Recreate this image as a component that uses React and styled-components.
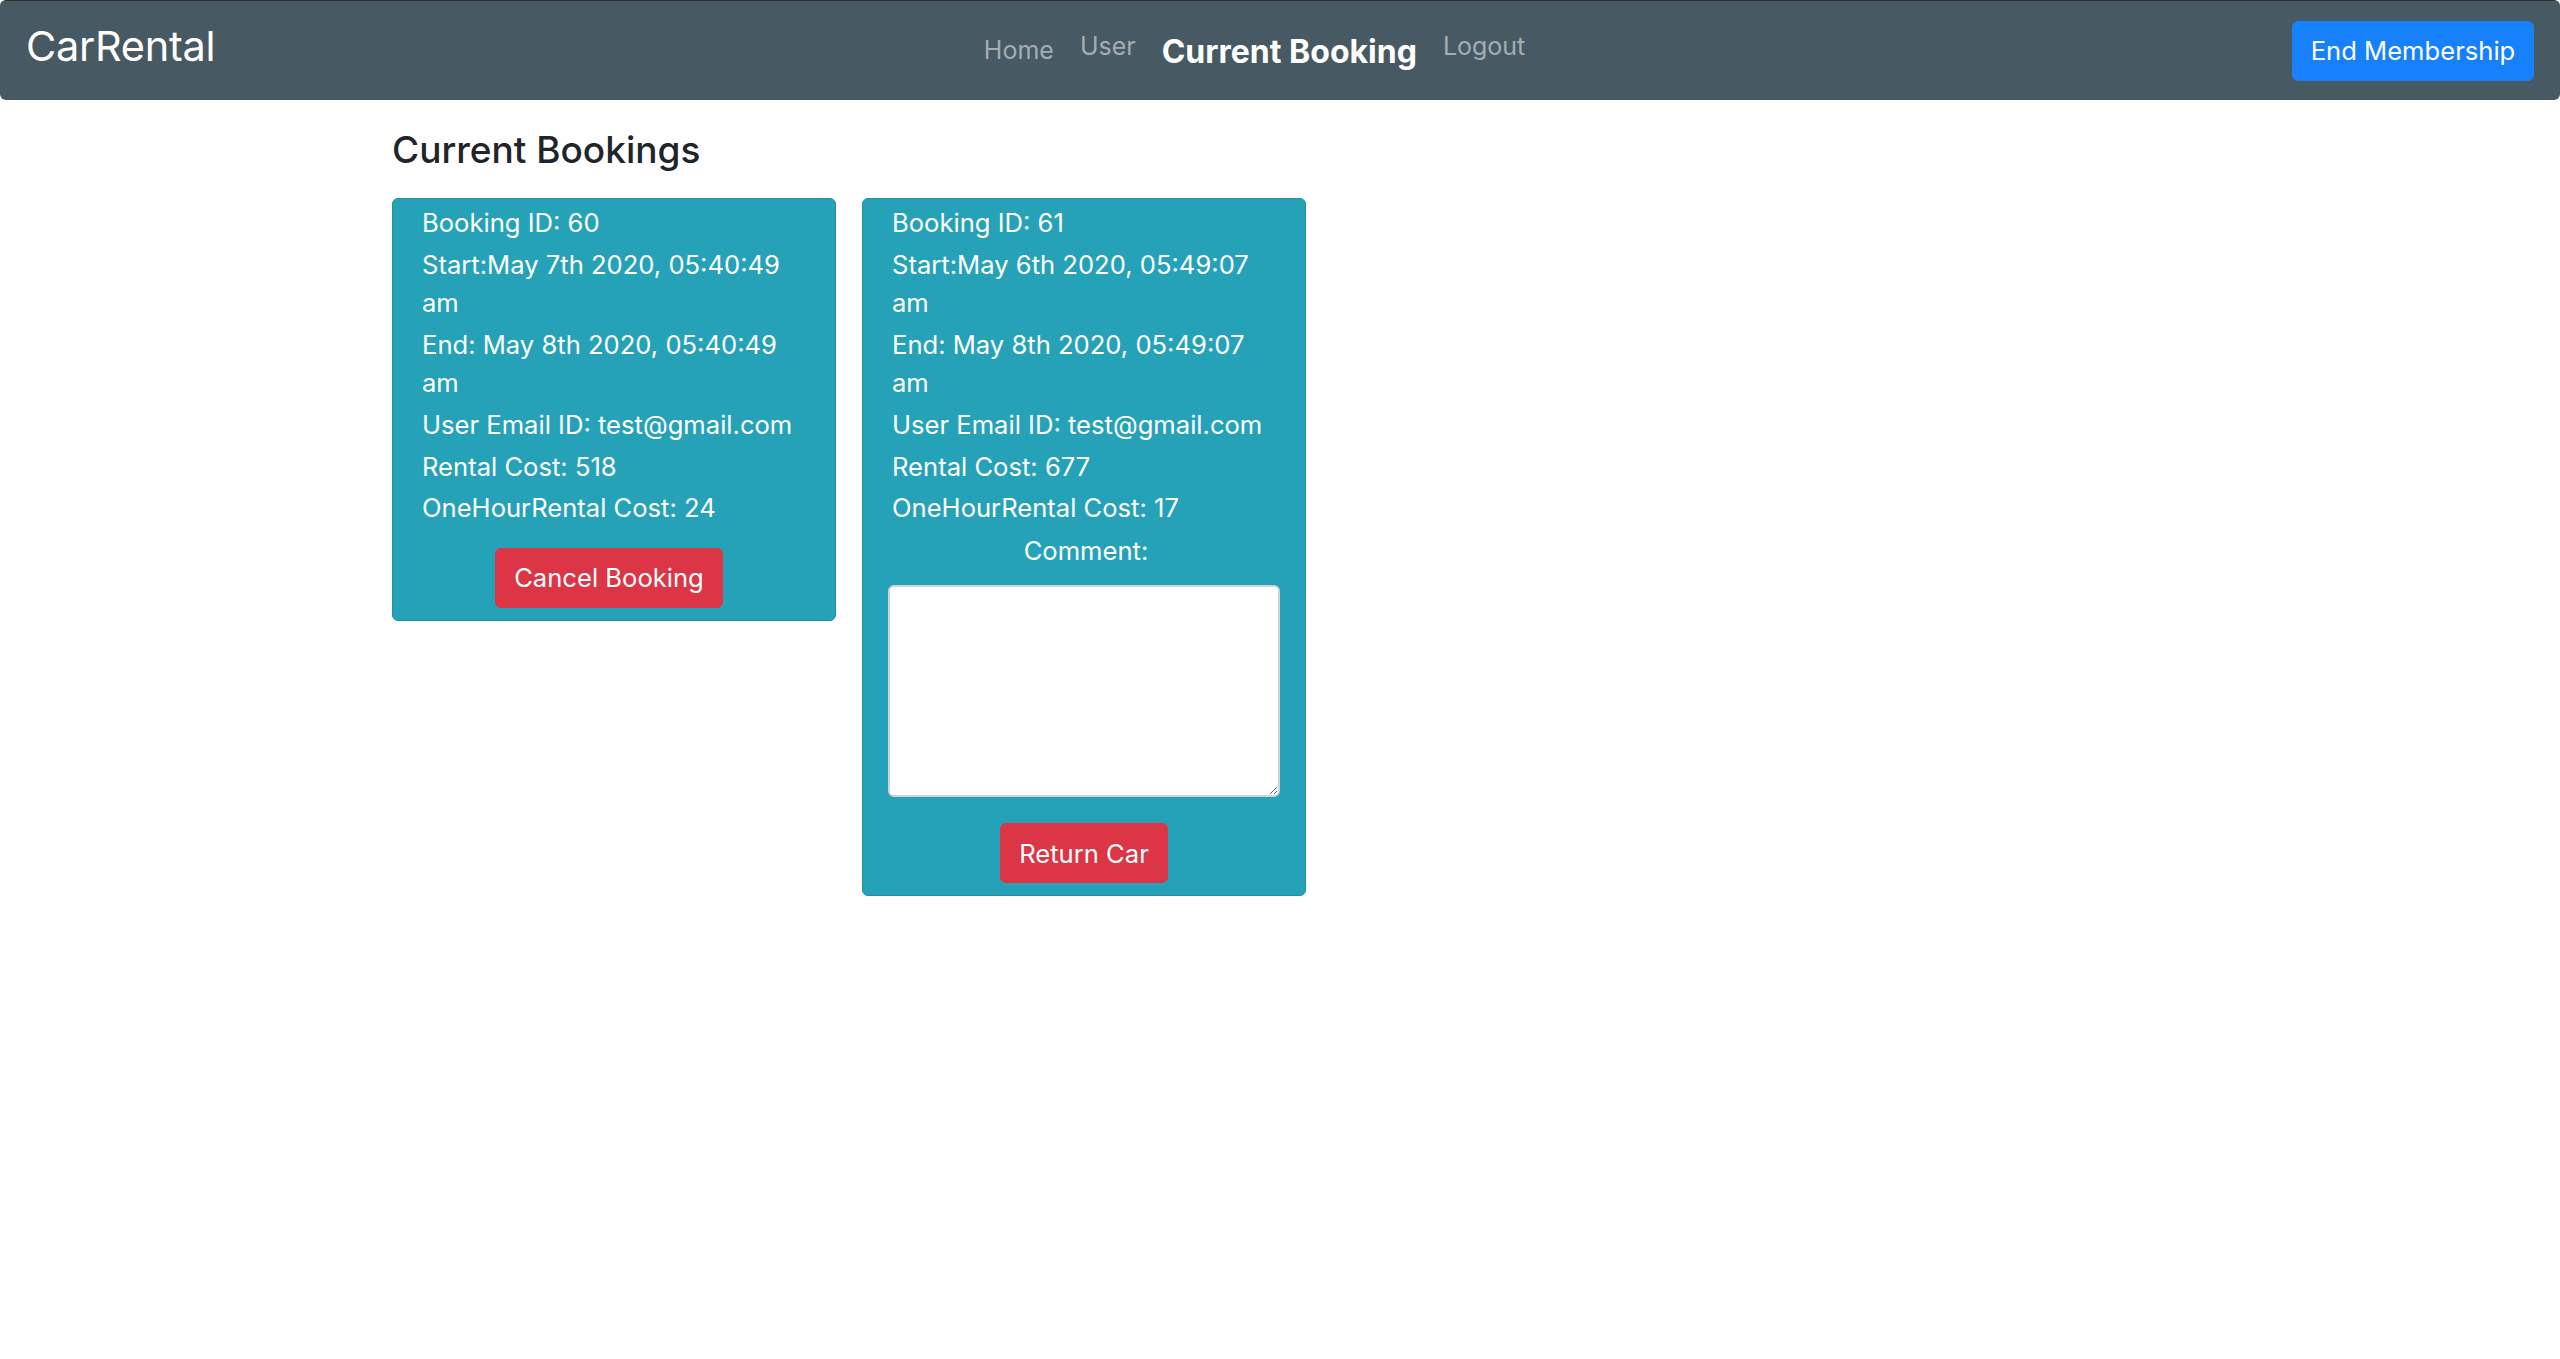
import React from 'react';
import styled, { createGlobalStyle } from 'styled-components';

const GlobalStyle = createGlobalStyle`
    * {
        box-sizing: border-box;
    }
    body {
        margin: 0;
        background: #fff;
        font-family: Inter, "Noto Sans", "Liberation Sans", sans-serif;
        color: #212529;
    }
`;

const Navbar = styled.nav`
    height: 100px;
    display: flex;
    align-items: center;
    padding: 0 26px 0 26px;
    background-color: #475a63;
    border-top: 1px solid #2c2c2c;
    border-radius: 6px;
`;

const Brand = styled.a`
    font-size: 41.5px;
    font-weight: 400;
    color: #fff;
    line-height: 1.2;
    margin-bottom: 8px;
    text-decoration: none;
    letter-spacing: -0.3px;
`;

const NavList = styled.ul`
    list-style: none;
    margin: 0 auto;
    padding: 0 0 0 2px;
    display: flex;
    align-items: center;
    gap: 26px;
`;

const NavLink = styled.li`
    font-size: ${(p) => (p.$active ? '32px' : '25px')};
    font-weight: ${(p) => (p.$active ? 700 : 400)};
    color: ${(p) => (p.$active ? '#fff' : '#a3adb2')};
    line-height: 1.5;
    margin-top: ${(p) => (p.$shift > 0 ? `${p.$shift * 2}px` : '0')};
    margin-bottom: ${(p) => (p.$shift < 0 ? `${-p.$shift * 2}px` : '0')};
    cursor: pointer;
`;

const Button = styled.button`
    height: 60px;
    padding: 0 20px;
    font-family: inherit;
    font-size: 25.6px;
    color: #fff;
    background-color: ${(p) => (p.$variant === 'danger' ? '#dc3545' : '#1681fb')};
    border: 1px solid ${(p) => (p.$variant === 'danger' ? '#dc3545' : '#1681fb')};
    border-radius: 6px;
    cursor: pointer;
`;

const EndButton = styled(Button)`
    width: 242px;
    padding: 0;
`;

const Container = styled.main`
    max-width: 1824px;
    margin: 0 auto;
    padding: 0 24px;
`;

const Title = styled.h4`
    margin: 28px 0 26px;
    font-size: 37px;
    font-weight: 500;
    line-height: 1.2;
    color: #212529;
`;

const CardRow = styled.div`
    display: flex;
    align-items: flex-start;
    gap: 26px;
`;

const Card = styled.div`
    width: 444px;
    display: flex;
    flex-direction: column;
    padding: 5px 25px 12px;
    background-color: #26a2b8;
    border: 1px solid #1f8fa2;
    border-radius: 6px;
    color: #fff;
`;

const Line = styled.p`
    margin: ${(p) => (p.$center ? '1px' : '0')} 0 3.2px;
    padding-left: 4px;
    font-size: 25.6px;
    line-height: 38.4px;
    text-align: ${(p) => (p.$center ? 'center' : 'left')};
`;

const CommentBox = styled.textarea`
    display: block;
    width: 100%;
    height: 212px;
    margin-top: 12px;
    border: 2px solid #cfd4d8;
    border-radius: 6px;
    background: #fff;
    font-family: inherit;
    font-size: 22px;
`;

const CardAction = styled(Button)`
    align-self: center;
    margin-top: ${(p) => p.$gap}px;
    margin-right: ${(p) => p.$nudge || 0}px;
    padding: 0 18px;
`;

const bookings = [
    {
        id: 60,
        start: 'May 7th 2020, 05:40:49 am',
        end: 'May 8th 2020, 05:40:49 am',
        email: 'test@gmail.com',
        cost: 518,
        hourCost: 24,
        returned: false,
    },
    {
        id: 61,
        start: 'May 6th 2020, 05:49:07 am',
        end: 'May 8th 2020, 05:49:07 am',
        email: 'test@gmail.com',
        cost: 677,
        hourCost: 17,
        returned: true,
    },
];

const BookingCard = ({ booking }) => (
    <Card>
        <Line>{`Booking ID: ${booking.id}`}</Line>
        <Line>{`Start:${booking.start}`}</Line>
        <Line>{`End: ${booking.end}`}</Line>
        <Line>{`User Email ID: ${booking.email}`}</Line>
        <Line>{`Rental Cost: ${booking.cost}`}</Line>
        <Line>{`OneHourRental Cost: ${booking.hourCost}`}</Line>
        {booking.returned ? (
            <>
                <Line $center>Comment:</Line>
                <CommentBox />
                <CardAction $variant="danger" $gap={26}>Return Car</CardAction>
            </>
        ) : (
            <CardAction $variant="danger" $gap={17} $nudge={10}>Cancel Booking</CardAction>
        )}
    </Card>
);

const App = () => (
    <>
        <GlobalStyle />
        <Navbar>
            <Brand>CarRental</Brand>
            <NavList>
                <NavLink>Home</NavLink>
                <NavLink $shift={-4}>User</NavLink>
                <NavLink $active $shift={1}>Current Booking</NavLink>
                <NavLink $shift={-4}>Logout</NavLink>
            </NavList>
            <EndButton>End Membership</EndButton>
        </Navbar>
        <Container>
            <Title>Current Bookings</Title>
            <CardRow>
                {bookings.map((b) => (
                    <BookingCard key={b.id} booking={b} />
                ))}
            </CardRow>
        </Container>
    </>
);

export default App;
